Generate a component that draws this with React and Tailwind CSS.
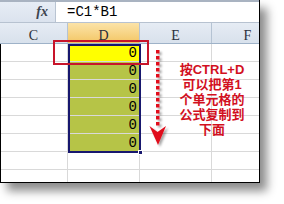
import React from 'react';

const cols = [
  { key: 'C', w: 'w-[68px]' },
  { key: 'D', w: 'w-[72px]' },
  { key: 'E', w: 'w-[72px]' },
  { key: 'F', w: 'w-[72px]' },
];

const rows = [0, 1, 2, 3, 4, 5, 6, 7];

function Arrow() {
  const dots = [];
  for (let y = 50; y <= 122; y += 6) dots.push(y);
  return (
    <svg className="absolute left-0 top-0" width="284" height="204" viewBox="0 0 284 204">
      <defs>
        <filter id="sh" x="-50%" y="-50%" width="200%" height="200%">
          <feDropShadow dx="2" dy="2" stdDeviation="1.2" floodColor="#000" floodOpacity="0.35" />
        </filter>
      </defs>
      <g filter="url(#sh)" fill="#e0101e">
        {dots.map((y) => (
          <rect key={y} x="156" y={y} width="3.5" height="3.5" />
        ))}
        <path d="M149.5 126 L157.5 132 L166 126 L158 145 Z" />
      </g>
    </svg>
  );
}

export default function App() {
  return (
    <div className="w-[284px] h-[204px] bg-white relative overflow-hidden" style={{ fontFamily: '"Liberation Mono", monospace' }}>
      {/* sheet frame */}
      <div className="w-[260px] h-[183px] bg-white border-r border-black overflow-hidden flex flex-col shadow-[7px_8px_9px_rgba(0,0,0,0.45)]">
        {/* formula bar */}
        <div className="h-[23px] shrink-0 flex border-t-2 border-b border-t-[#a9b3c1] border-b-[#b7c2d0]">
          <div className="w-[56px] bg-gradient-to-b from-[#e7edf5] to-[#dbe3ee] border-r border-[#b9c4d2] flex items-center justify-end pr-[7px]">
            <span className="text-[14px] font-bold italic text-[#3c4450] leading-none" style={{ fontFamily: '"Liberation Serif", serif' }}>fx</span>
          </div>
          <div className="flex-1 flex items-center pl-[11px] text-[14px] text-black leading-none">=C1*B1</div>
        </div>
        {/* column headers */}
        <div className="h-[21px] shrink-0 flex border-b border-[#9eb2c8] bg-gradient-to-b from-[#e6ecf4] to-[#d8e1ec]" style={{ fontFamily: '"Liberation Serif", serif' }}>
          {cols.map((c) => (
            <div
              key={c.key}
              className={`${c.w} shrink-0 border-r border-[#b5c3d3] flex items-center justify-center pt-[4px] text-[14px] text-[#2a2f3a] ${c.key === 'D' ? 'bg-gradient-to-b from-[#fbe3a8] to-[#f3c662]' : ''}`}
            >
              {c.key}
            </div>
          ))}
        </div>
        {/* grid body */}
        <div className="flex-1 border-l border-b border-black overflow-hidden">
          {rows.map((r) => (
            <div key={r} className="h-[18px] flex border-b border-[#d9d9d9]">
              <div className="w-[67px] shrink-0 border-r border-[#d9d9d9]" />
              <div
                className={`w-[72px] shrink-0 border-r border-[#d9d9d9] flex items-center justify-end pr-[2px] pt-[1px] text-[14px] leading-none text-black ${r === 0 ? 'bg-[#ffff00]' : r < 6 ? 'bg-[#b6c447]' : ''}`}
              >
                {r < 6 ? '0' : ''}
              </div>
              <div className="w-[72px] shrink-0 border-r border-[#d9d9d9]" />
              <div className="w-[72px] shrink-0" />
            </div>
          ))}
        </div>
      </div>

      {/* selection border D1:D6 */}
      <div className="absolute left-[68px] top-[44px] w-[73px] h-[109px] border-[2.5px] border-[#17176e]" />
      <div className="absolute left-[138px] top-[150px] w-[5px] h-[5px] bg-[#17176e] border border-white" />

      {/* red highlight box */}
      <div className="absolute left-[53px] top-[40px] w-[96px] h-[25px] border-2 border-[#c8142a]" />

      <Arrow />

      {/* annotation */}
      <div
        className="absolute left-[172px] top-[62px] w-[80px] text-center text-[13px] font-bold leading-[15px] text-[#d2101e]"
        style={{ fontFamily: '"Liberation Sans", "Noto Sans CJK SC", sans-serif' }}
      >
        <div>按CTRL+D</div>
        <div>可以把第1</div>
        <div>个单元格的</div>
        <div>公式复制到</div>
        <div>下面</div>
      </div>
    </div>
  );
}
